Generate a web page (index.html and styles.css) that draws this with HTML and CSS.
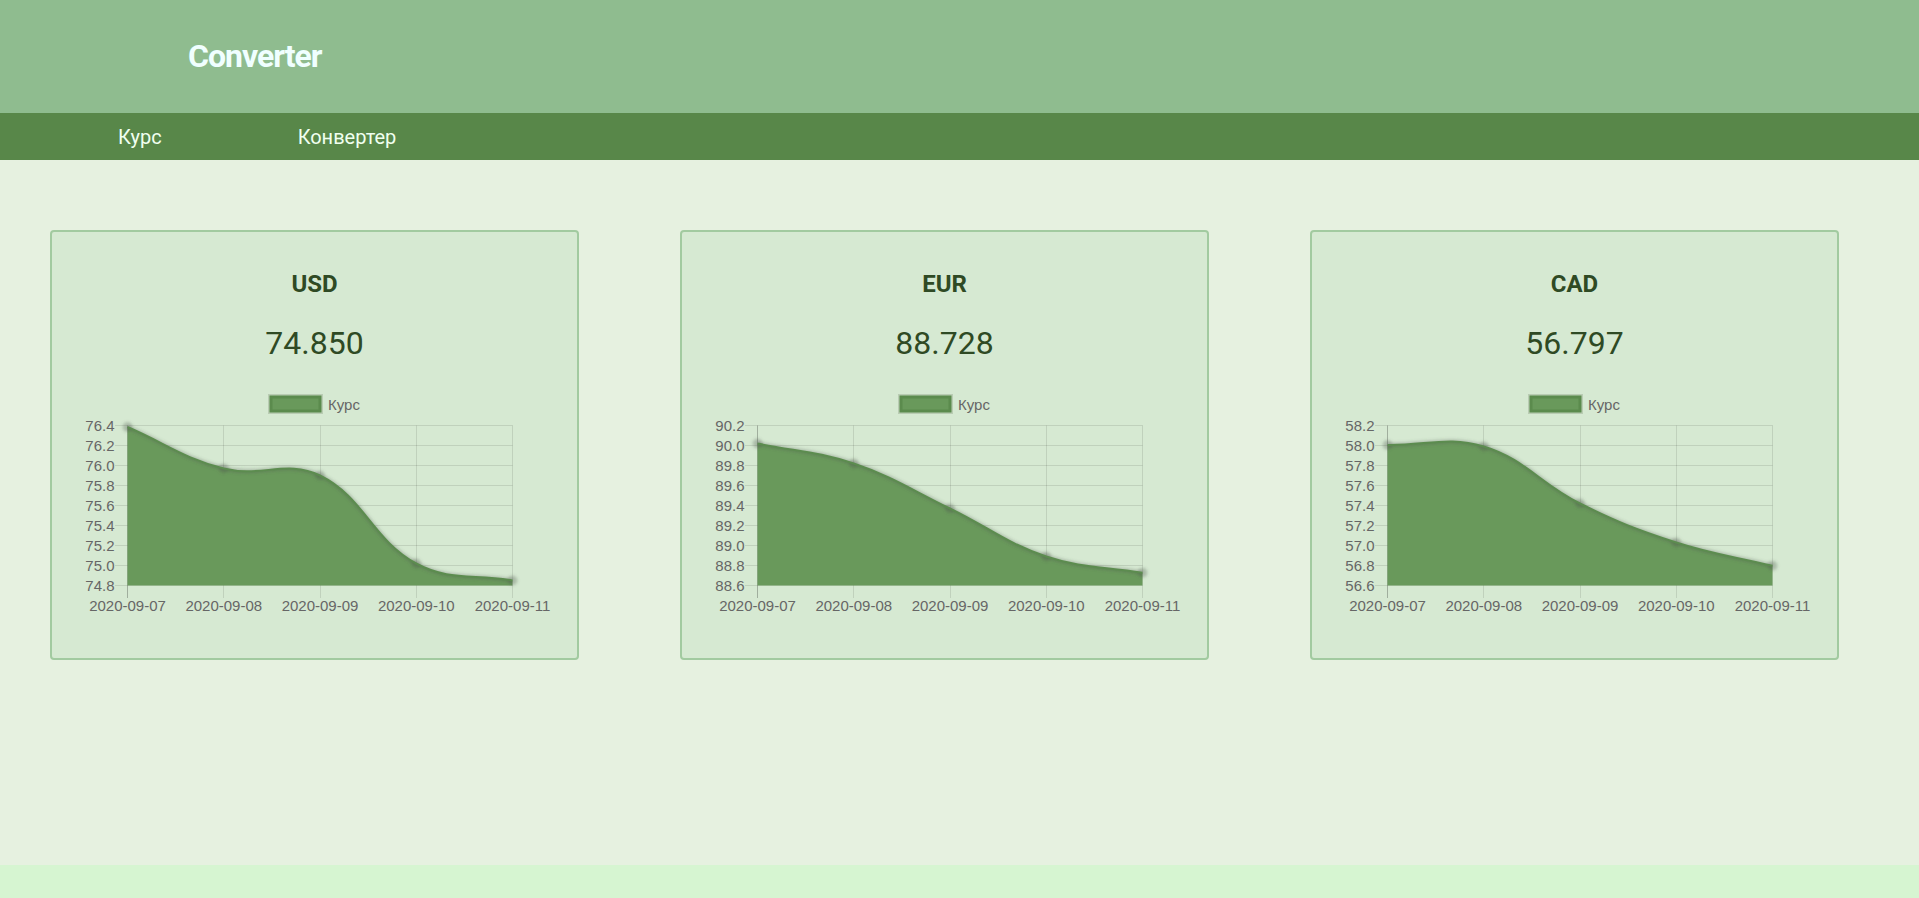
FILE: index.html
```html
<!DOCTYPE html>
<html lang="ru">
<head>
<meta charset="utf-8">
<title>Converter</title>
<link rel="stylesheet" href="styles.css">
</head>
<body>
<header class="topbar">
  <h1 class="brand">Converter</h1>
</header>
<nav class="menu">
  <a class="menu-link" href="#">Курс</a>
  <a class="menu-link" href="#">Конвертер</a>
</nav>
<main class="content">
  <section class="card">
    <h2 class="card-title">USD</h2>
    <div class="card-rate">74.850</div>
    <div class="chart" data-values="76.385,75.97,75.90,75.02,74.85" data-min="74.8" data-max="76.4"></div>
  </section>
  <section class="card">
    <h2 class="card-title">EUR</h2>
    <div class="card-rate">88.728</div>
    <div class="chart" data-values="90.02,89.82,89.37,88.89,88.728" data-min="88.6" data-max="90.2"></div>
  </section>
  <section class="card">
    <h2 class="card-title">CAD</h2>
    <div class="card-rate">56.797</div>
    <div class="chart" data-values="58.005,57.99,57.42,57.03,56.797" data-min="56.6" data-max="58.2"></div>
  </section>
</main>
<footer class="bottom"></footer>
<script src="charts.js"></script>
</body>
</html>
```

FILE: styles.css
```css
* { box-sizing: border-box; }
html, body { margin: 0; height: 100%; }
body {
  font-family: Roboto, "Noto Sans", Arial, sans-serif;
  background: #e6f1e0;
  display: flex;
  flex-direction: column;
  min-height: 100vh;
}
.topbar {
  height: 113px;
  background: #8fbc8f;
  padding: 38px 0 0 188px;
}
.brand {
  margin: 0;
  font-size: 32px;
  line-height: 37.5px;
  font-weight: 700;
  letter-spacing: -1px;
  color: #f0ffff;
}
.menu {
  height: 47px;
  background: #588749;
  display: flex;
  align-items: center;
  padding-left: 118px;
  gap: 136px;
}
.menu-link {
  color: #f0fff0;
  font-size: 20px;
  text-decoration: none;
}
.content {
  flex: 1;
  display: flex;
  align-items: flex-start;
  gap: 101px;
  padding: 70px 0 0 50px;
}
.card {
  width: 529px;
  border: 2px solid #a2caa0;
  border-radius: 4px;
  background: #d6e9d2;
  padding: 38px 0 24px;
  display: flex;
  flex-direction: column;
  align-items: center;
}
.card-title {
  margin: 0;
  font-size: 24px;
  line-height: 28px;
  font-weight: 700;
  color: #2f4a24;
}
.card-rate {
  margin-top: 26px;
  font-size: 32px;
  line-height: 38px;
  color: #2f4a24;
}
.chart {
  margin-top: 22px;
  width: 500px;
  height: 250px;
}
.chart svg { display: block; }
.grid { stroke: rgba(0, 0, 0, 0.1); stroke-width: 1; fill: none; }
.grid-zero { stroke: rgba(0, 0, 0, 0.25); stroke-width: 1; fill: none; }
.tick-label {
  font-family: "Liberation Sans", Arial, sans-serif;
  font-size: 15px;
  fill: #666666;
}
.legend-box { fill: #69995b; stroke: #5b8b4d; stroke-width: 3; }
.legend-halo { fill: none; stroke: rgba(120, 140, 110, 0.3); stroke-width: 3; }
.area { fill: #69995b; }
.line-halo { fill: none; stroke: rgba(80, 90, 75, 0.3); stroke-width: 4.5; }
.line { fill: none; stroke: #5c8c4f; stroke-width: 2; }
.point-halo { fill: rgba(80, 90, 75, 0.3); }
.bottom {
  height: 33px;
  background: #d6f5d1;
}
```

FILE: charts.js
```js
(function () {
  var labels = ['2020-09-07', '2020-09-08', '2020-09-09', '2020-09-10', '2020-09-11'];
  var L = 62.5, R = 447.5, T = 41.5, B = 201.5, TICK = 12.5;
  function r(n) { return n.toFixed(2); }
  function half(v) { return Math.floor(v) + 0.5; }
  function clamp(v, a, b) { return Math.max(a, Math.min(b, v)); }

  document.querySelectorAll('.chart').forEach(function (el, ci) {
    var vals = el.dataset.values.split(',').map(Number);
    var min = +el.dataset.min, max = +el.dataset.max;
    var n = Math.round((max - min) / 0.2);
    var s = '<svg xmlns="http://www.w3.org/2000/svg" width="500" height="250" viewBox="0 0 500 250">';
    s += '<defs><filter id="blur' + ci + '" x="-20%" y="-20%" width="140%" height="140%"><feGaussianBlur stdDeviation="1.6"/></filter></defs>';

    s += '<rect class="legend-halo" x="204.5" y="11.5" width="52" height="17"/>';
    s += '<rect class="legend-box" x="206" y="13" width="49" height="14"/>';
    s += '<text class="tick-label" x="263" y="25.5">Курс</text>';

    var i, y, x;
    for (i = 0; i <= n; i++) {
      y = half(T + (B - T) * i / n);
      s += '<line class="grid" x1="' + (L - TICK) + '" y1="' + y + '" x2="' + R + '" y2="' + y + '"/>';
      s += '<text class="tick-label" text-anchor="end" x="49.5" y="' + r(y + 5.3) + '">' + (max - i * 0.2).toFixed(1) + '</text>';
    }
    var xs = [];
    for (i = 0; i < 5; i++) {
      x = L + (R - L) * i / 4;
      xs.push(x);
      var gx = half(x);
      s += '<line class="' + (i === 0 ? 'grid-zero' : 'grid') + '" x1="' + gx + '" y1="' + T + '" x2="' + gx + '" y2="' + (B + TICK) + '"/>';
      s += '<text class="tick-label" text-anchor="middle" x="' + r(x) + '" y="227">' + labels[i] + '</text>';
    }

    var pts = vals.map(function (v, k) {
      return { x: xs[k], y: T + (max - v) / (max - min) * (B - T) };
    });
    var t = 0.4;
    pts.forEach(function (p, k) {
      var prev = pts[k > 0 ? k - 1 : 0];
      var next = pts[k < pts.length - 1 ? k + 1 : pts.length - 1];
      var d01 = Math.hypot(p.x - prev.x, p.y - prev.y);
      var d12 = Math.hypot(next.x - p.x, next.y - p.y);
      var s01 = d01 / (d01 + d12), s12 = d12 / (d01 + d12);
      if (isNaN(s01)) s01 = 0;
      if (isNaN(s12)) s12 = 0;
      var fa = t * s01, fb = t * s12;
      p.cpx0 = clamp(p.x - fa * (next.x - prev.x), L, R);
      p.cpy0 = clamp(p.y - fa * (next.y - prev.y), T, B);
      p.cpx1 = clamp(p.x + fb * (next.x - prev.x), L, R);
      p.cpy1 = clamp(p.y + fb * (next.y - prev.y), T, B);
    });
    var line = 'M' + r(pts[0].x) + ' ' + r(pts[0].y);
    for (i = 1; i < pts.length; i++) {
      var a = pts[i - 1], b = pts[i];
      line += ' C' + r(a.cpx1) + ' ' + r(a.cpy1) + ' ' + r(b.cpx0) + ' ' + r(b.cpy0) + ' ' + r(b.x) + ' ' + r(b.y);
    }
    var area = line + ' L' + r(pts[4].x) + ' ' + B + ' L' + r(pts[0].x) + ' ' + B + ' Z';
    s += '<path class="area" d="' + area + '"/>';
    s += '<g filter="url(#blur' + ci + ')"><path class="line-halo" d="' + line + '"/>';
    pts.forEach(function (p) {
      s += '<circle class="point-halo" cx="' + r(p.x) + '" cy="' + r(p.y) + '" r="5"/>';
    });
    s += '</g>';
    s += '<path class="line" d="' + line + '"/>';
    s += '</svg>';
    el.innerHTML = s;
  });
})();
```
